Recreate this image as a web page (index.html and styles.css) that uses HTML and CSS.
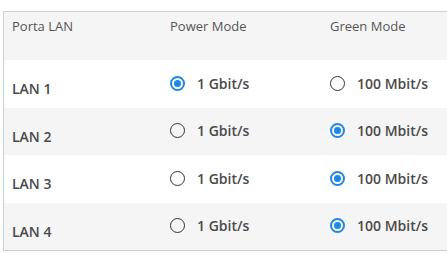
FILE: index.html
```html
<!DOCTYPE html>
<html>
<head>
    <title>Porte LAN</title>
    <link rel="stylesheet" href="styles.css">
</head>
<body>
    <div class="lan-table">
        <div class="row head">
            <div class="cell">Porta LAN</div>
            <div class="cell">Power Mode</div>
            <div class="cell">Green Mode</div>
        </div>
        <div class="row">
            <div class="cell name">LAN 1</div>
            <label class="cell opt"><span class="radio on"></span>1 Gbit/s</label>
            <label class="cell opt"><span class="radio"></span>100 Mbit/s</label>
        </div>
        <div class="row alt">
            <div class="cell name">LAN 2</div>
            <label class="cell opt"><span class="radio"></span>1 Gbit/s</label>
            <label class="cell opt"><span class="radio on"></span>100 Mbit/s</label>
        </div>
        <div class="row">
            <div class="cell name">LAN 3</div>
            <label class="cell opt"><span class="radio"></span>1 Gbit/s</label>
            <label class="cell opt"><span class="radio on"></span>100 Mbit/s</label>
        </div>
        <div class="row alt">
            <div class="cell name">LAN 4</div>
            <label class="cell opt"><span class="radio"></span>1 Gbit/s</label>
            <label class="cell opt"><span class="radio on"></span>100 Mbit/s</label>
        </div>
    </div>
</body>
</html>
```

FILE: styles.css
```css
body {
    margin: 0;
    overflow: hidden;
    font-family: "Open Sans", "Liberation Sans", sans-serif;
    color: #4a4a4a;
    background: #fff;
}
.lan-table {
    margin: 11px 0 0 3px;
    border-top: 1px solid #c9d0d4;
    border-bottom: 1px solid #c9d0d4;
    border-left: 1px solid #c9d0d4;
}
.row {
    display: grid;
    grid-template-columns: 158px 160px 1fr;
    height: 47.5px;
}
.row.head {
    height: 48px;
    background: #f5f5f5;
}
.row.alt {
    background: #f5f5f5;
}
.cell {
    padding-left: 8px;
    display: flex;
    align-items: center;
    white-space: nowrap;
}
.head .cell {
    align-items: flex-start;
    padding-top: 5px;
    font-size: 13px;
    color: #555;
}
.name {
    padding-top: 10px;
    font-size: 14px;
    font-weight: 600;
    color: #4a4a4a;
}
.opt {
    padding-bottom: 1px;
    font-size: 14px;
    font-weight: 600;
    color: #4a4a4a;
}
.radio {
    box-sizing: border-box;
    width: 15px;
    height: 15px;
    border: 1.5px solid #333;
    border-radius: 50%;
    margin-right: 12px;
    position: relative;
}
.radio.on {
    border: 2px solid #1e88e5;
}
.radio.on::after {
    content: "";
    position: absolute;
    left: 2px;
    top: 2px;
    width: 7px;
    height: 7px;
    border-radius: 50%;
    background: #1e88e5;
}
```
